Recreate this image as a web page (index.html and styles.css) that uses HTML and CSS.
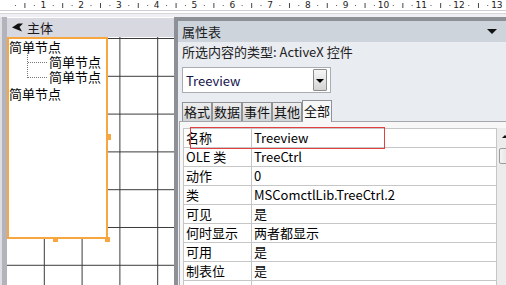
FILE: index.html
```html
<!DOCTYPE html>
<html lang="zh-CN">

<head>
    <meta charset="UTF-8">
    <title>主体 - 属性表</title>
    <link rel="stylesheet" href="styles.css">
</head>

<body>

    <div class="ruler">
        <div class="ruler-nums">
            <span>1</span><span>2</span><span>3</span><span>4</span><span>5</span><span>6</span><span>7</span>
            <span>8</span><span>9</span><span>10</span><span>11</span><span>12</span><span>13</span>
        </div>
    </div>
    <div class="ruler-edge"></div>

    <div class="workspace">
        <div class="designer">
            <div class="section-bar">
                <svg class="section-icon" width="11" height="9" viewBox="0 0 11 9">
                    <path d="M0 4.5 L6 0.5 L11 0.5 L7.5 4 L10 8.5 L5 6.5 Z" fill="#111" />
                </svg>
                <span>主体</span>
            </div>
            <div class="form-grid">
                <div class="treeview">
                    <div class="node">简单节点</div>
                    <div class="children">
                        <div class="node child">简单节点</div>
                        <div class="node child">简单节点</div>
                    </div>
                    <div class="node gap">简单节点</div>

                    <span class="handle handle-right"></span>
                    <span class="handle handle-bottom"></span>
                    <span class="handle handle-corner"></span>
                </div>
            </div>
        </div>

        <div class="props">
            <div class="props-title">
                <span>属性表</span>
                <span class="title-arrow"></span>
                <span class="title-close">✕</span>
            </div>
            <div class="props-body">
                <div class="sel-type">所选内容的类型: ActiveX 控件</div>
                <div class="combo">
                    <span class="combo-text">Treeview</span>
                    <span class="combo-btn"></span>
                </div>
                <div class="tabs">
                    <span class="tab">格式</span>
                    <span class="tab">数据</span>
                    <span class="tab">事件</span>
                    <span class="tab">其他</span>
                    <span class="tab active">全部</span>
                </div>
                <div class="tab-page">
                    <div class="prop-grid">
                        <div class="prop-row"><div class="prop-name">名称</div><div class="prop-val">Treeview</div></div>
                        <div class="prop-row"><div class="prop-name">OLE 类</div><div class="prop-val">TreeCtrl</div></div>
                        <div class="prop-row"><div class="prop-name">动作</div><div class="prop-val">0</div></div>
                        <div class="prop-row"><div class="prop-name">类</div><div class="prop-val">MSComctlLib.TreeCtrl.2</div></div>
                        <div class="prop-row"><div class="prop-name">可见</div><div class="prop-val">是</div></div>
                        <div class="prop-row"><div class="prop-name">何时显示</div><div class="prop-val">两者都显示</div></div>
                        <div class="prop-row"><div class="prop-name">可用</div><div class="prop-val">是</div></div>
                        <div class="prop-row"><div class="prop-name">制表位</div><div class="prop-val">是</div></div>
                        <div class="prop-row"><div class="prop-name"></div><div class="prop-val"></div></div>

                        <div class="focus-ring"></div>
                    </div>
                    <div class="vscroll">
                        <div class="scroll-up"></div>
                        <div class="scroll-thumb"></div>
                    </div>
                </div>
            </div>
        </div>
    </div>

</body>

</html>
```

FILE: styles.css
```css
html,
body {
    margin: 0;
    width: 506px;
    height: 285px;
    overflow: hidden;
}

body {
    font-family: "Noto Sans CJK SC", sans-serif;
    font-size: 13px;
    color: #1a1a1a;
    background: #fff;
}

/* ruler across the top */
.ruler {
    height: 10px;
    background-color: #fff;
    background-image:
        linear-gradient(to right, #444 1px, transparent 1px),
        linear-gradient(to right, #555 1px, transparent 1px);
    background-size: 37.8px 5px, 18.9px 1px;
    background-position: 24.4px 3px, 14.95px 5px;
    background-repeat: repeat-x;
}

.ruler-nums {
    display: flex;
    padding-left: 24.4px;
    font-family: "DejaVu Sans", sans-serif;
    font-size: 9px;
    line-height: 10px;
    color: #222;
}

.ruler-nums span {
    flex: 0 0 37.8px;
    text-align: center;
}

.ruler-edge {
    height: 6px;
    border-top: 1px solid #cbcdd9;
    background: linear-gradient(#fff 0 2px, #d7d7de 2px 3px, #efeff3 3px);
}

.workspace {
    display: flex;
    height: 268px;
}

/* form designer */
.designer {
    flex: 0 0 174px;
    display: flex;
    flex-direction: column;
    padding-left: 7px;
    box-sizing: border-box;
    background: linear-gradient(to right, #dedee4 0 2px, #b3b3bc 2px 7px, transparent 7px);
}

.section-bar {
    height: 19px;
    margin-top: 1px;
    display: flex;
    align-items: center;
    background: #d8d8e1;
    line-height: 19px;
}

.section-icon {
    margin: 0 4px 0 5px;
}

.form-grid {
    flex: 1;
    background-color: #fff;
    background-image:
        linear-gradient(to right, #3a3a3a 1px, transparent 1px),
        linear-gradient(to bottom, #3a3a3a 1px, transparent 1px);
    background-size: 37.8px 37.8px;
    background-position: 36.8px 1px;
}

.treeview {
    position: relative;
    width: 101px;
    height: 202px;
    box-sizing: border-box;
    border: 2px solid #f8a63f;
    background: #fff;
}

.node {
    line-height: 15px;
    white-space: nowrap;
    color: #000;
}

.children {
    position: relative;
}

.children::before {
    content: "";
    position: absolute;
    left: 18px;
    top: -1px;
    bottom: 6px;
    border-left: 1px dotted #777;
}

.child {
    position: relative;
    padding-left: 40px;
}

.child::before {
    content: "";
    position: absolute;
    left: 19px;
    top: 8px;
    width: 19px;
    border-top: 1px dotted #777;
}

.gap {
    margin-top: 2px;
}

.handle {
    position: absolute;
    background: #f8a63f;
}

.handle-right {
    left: 99px;
    top: 95px;
    width: 3px;
    height: 6px;
}

.handle-bottom {
    left: 44px;
    top: 200px;
    width: 5px;
    height: 3px;
}

.handle-corner {
    left: 96px;
    top: 198px;
    width: 5px;
    height: 5px;
}

/* property sheet */
.props {
    flex: 0 0 346px;
    border-left: 4px solid #8d9197;
    border-top: 4px solid #8d9197;
    background: #e9ecf0;
}

.props-title {
    height: 21px;
    display: flex;
    align-items: center;
    padding-left: 4px;
    background: #cdd4dc;
    color: #1e1e1e;
}

.title-arrow {
    margin-left: auto;
    margin-right: 9px;
    border-left: 5px solid transparent;
    border-right: 5px solid transparent;
    border-top: 5px solid #111;
}

.title-close {
    width: 8px;
    margin-right: 10px;
    font-family: "DejaVu Sans", sans-serif;
    font-size: 9px;
    color: #222;
}

.props-body {
    padding-left: 4px;
}

.sel-type {
    line-height: 20px;
    color: #222;
}

.combo {
    width: 149px;
    height: 26px;
    margin-top: 5px;
    box-sizing: border-box;
    display: flex;
    align-items: center;
    border: 1px solid #a9adb3;
    background: #fff;
}

.combo-text {
    padding-left: 3px;
    color: #14144e;
}

.combo-btn {
    position: relative;
    margin-left: auto;
    margin-right: 3px;
    width: 14px;
    height: 22px;
    box-sizing: border-box;
    border: 1px solid #8c8c8c;
    border-radius: 1px;
    background: linear-gradient(#f7f7f7, #d3d3d3);
}

.combo-btn::after {
    content: "";
    position: absolute;
    left: 2px;
    top: 9px;
    border-left: 4px solid transparent;
    border-right: 4px solid transparent;
    border-top: 4px solid #000;
}

.tabs {
    display: flex;
    align-items: flex-end;
    height: 21px;
    margin-top: 7px;
}

.tab {
    height: 18px;
    padding: 0 1px;
    line-height: 18px;
    border: 1px solid #8f9297;
    border-bottom: none;
    background: linear-gradient(#eeeeee, #d2d3d5);
    color: #111;
}

.tab.active {
    position: relative;
    height: 21px;
    line-height: 19px;
    margin-bottom: -1px;
    background: #f7f7f7;
}

.tab-page {
    display: flex;
    margin-left: -3px;
    padding: 6px 0 0 3px;
    border-top: 1px solid #a3a6ab;
    border-left: 1px solid #a3a6ab;
    background: #f7f7f7;
    height: 200px;
}

.prop-grid {
    position: relative;
    width: 314px;
    box-sizing: border-box;
    border: 1px solid #c6c6c6;
    border-bottom: none;
    background: #fff;
}

.prop-row {
    display: flex;
    height: 18px;
    border-bottom: 1px solid #c6c6c6;
    line-height: 18px;
    color: #000;
}

.prop-name {
    width: 65px;
    padding-left: 2px;
    border-right: 1px solid #c6c6c6;
    white-space: nowrap;
}

.prop-val {
    padding-left: 2px;
    white-space: nowrap;
}

.focus-ring {
    position: absolute;
    left: 6px;
    top: -2px;
    width: 193px;
    height: 20px;
    border: 1px solid #e24141;
}

.vscroll {
    width: 17px;
    background: #ececec;
}

.scroll-up {
    position: relative;
    height: 17px;
}

.scroll-up::after {
    content: "";
    position: absolute;
    left: 5px;
    top: 7px;
    border-left: 3px solid transparent;
    border-right: 3px solid transparent;
    border-bottom: 3px solid #111;
}

.scroll-thumb {
    height: 14px;
    margin: 3px 2px 0;
    border: 1px solid #9c9c9c;
    border-radius: 2px;
    background: linear-gradient(to right, #f4f4f4, #dcdcdc);
}
```
